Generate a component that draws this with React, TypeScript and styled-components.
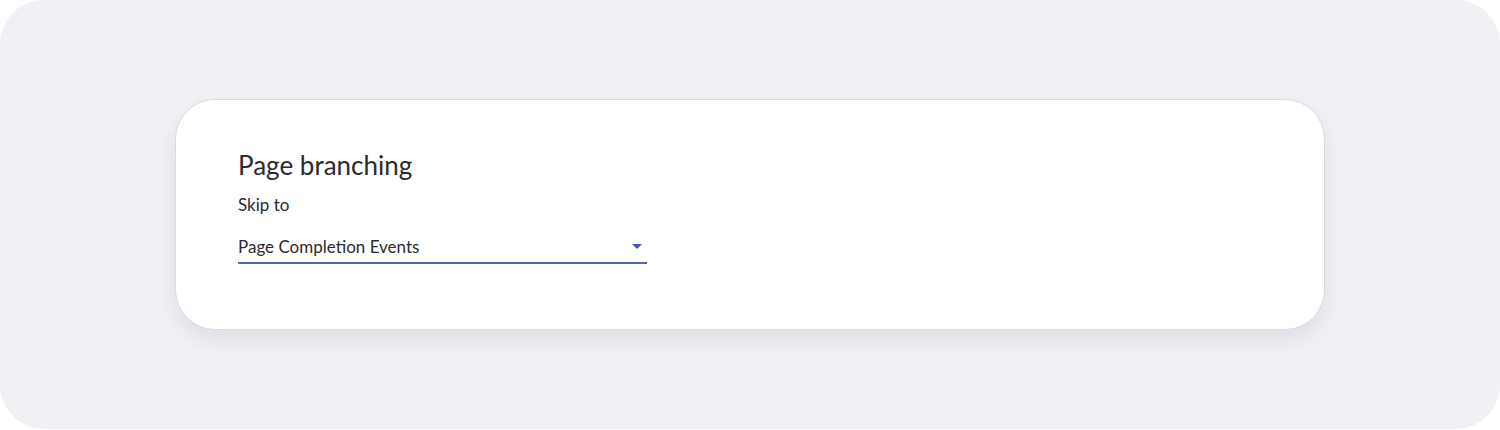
import styled, { createGlobalStyle } from 'styled-components';

const Global = createGlobalStyle`
  html, body {
    margin: 0;
    padding: 0;
    background: #ffffff;
    font-family: Lato, "Liberation Sans", sans-serif;
  }
`;

export default function App() {
  return (
    <>
      <Global />
      <Frame>
        <Card>
          <Title>Page branching</Title>
          <Label>Skip to</Label>
          <Select>
            <SelectValue>Page Completion Events</SelectValue>
            <Caret />
          </Select>
        </Card>
      </Frame>
    </>
  );
}

const Frame = styled.div`
  width: 1500px;
  height: 429px;
  box-sizing: border-box;
  background: #f0f1f5;
  border-radius: 44px;
  padding: 99px 175px 0 175px;
`;

const Card = styled.div`
  width: 1150px;
  height: 231px;
  box-sizing: border-box;
  background: #ffffff;
  border: 1px solid #d9dbe0;
  border-radius: 40px;
  box-shadow: 0 10px 20px rgba(40, 50, 80, 0.09);
  padding: 50px 62px 0 62px;
  display: flex;
  flex-direction: column;
`;

const Title = styled.h2`
  margin: 0;
  font-size: 26px;
  line-height: 30px;
  font-weight: 400;
  color: #2a2b2e;
`;

const Label = styled.div`
  margin-top: 15px;
  font-size: 17px;
  line-height: 20px;
  color: #2a2b2e;
`;

const Select = styled.div`
  margin-top: 22px;
  width: 409px;
  box-sizing: border-box;
  border-bottom: 2px solid #5662b5;
  display: flex;
  align-items: center;
  justify-content: space-between;
  padding: 0 5px 5px 0;
`;

const SelectValue = styled.span`
  font-size: 17px;
  line-height: 20px;
  color: #2a2b2e;
`;

const Caret = styled.span`
  width: 0;
  height: 0;
  border-left: 5px solid transparent;
  border-right: 5px solid transparent;
  border-top: 5px solid #4a56a8;
  margin-bottom: 2px;
`;
